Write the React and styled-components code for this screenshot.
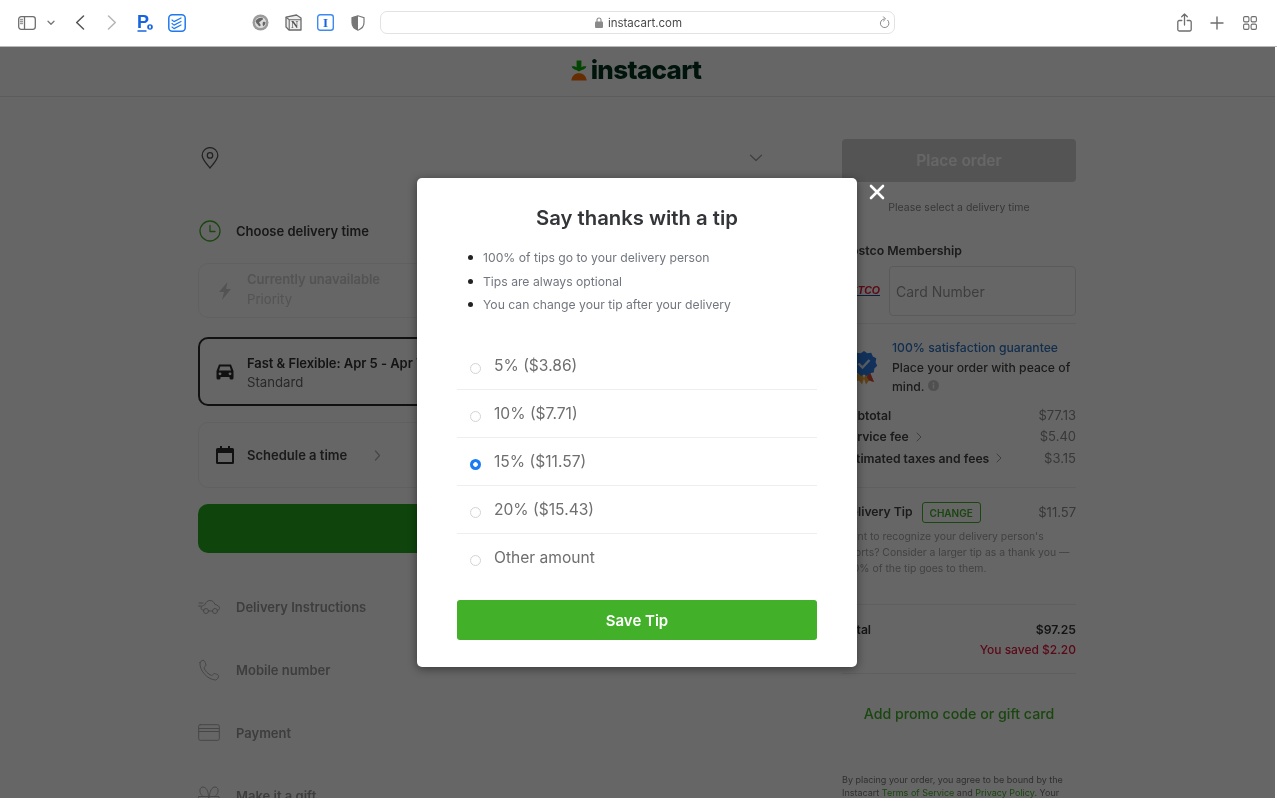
import React from "react";
import styled, { createGlobalStyle } from "styled-components";

const GlobalStyle = createGlobalStyle`
  html, body { margin: 0; padding: 0; background: #fff; overflow: hidden; }
  * { box-sizing: border-box; }
  body { font-family: Inter, "Liberation Sans", sans-serif; }
`;

const Frame = styled.div`
  width: 1277px;
  height: 803px;
  overflow: hidden;
  background: #fff;
  filter: blur(0.5px);
`;

/* browser chrome */
const Toolbar = styled.div`
  height: 47px;
  display: flex;
  align-items: center;
  padding: 0 11px 1px 11px;
  background: #fff;
  border-bottom: 1px solid #b9b9b9;
`;
const Slot = styled.div`
  width: ${(p) => p.$w || 32.5}px;
  height: 24px;
  display: flex;
  align-items: center;
  justify-content: center;
  flex: none;
`;
const Gap = styled.div`
  width: ${(p) => p.$w}px;
  flex: none;
`;
const AddressBar = styled.div`
  width: 515px;
  height: 23px;
  margin-left: 5px;
  padding-left: 3px;
  flex: none;
  position: relative;
  display: flex;
  align-items: center;
  justify-content: center;
  gap: 5px;
  border: 1px solid #e2e2e2;
  border-radius: 7px;
  font-size: 11.5px;
  color: #4a4a4a;
`;
const Reload = styled.div`
  position: absolute;
  right: 4px;
  top: 4px;
  display: flex;
`;
const RightTools = styled.div`
  margin-left: auto;
  display: flex;
`;

/* page below the chrome */
const Viewport = styled.div`
  position: relative;
  width: 1275px;
  height: 751px;
  overflow: hidden;
  background: #fff;
`;
const Header = styled.header`
  height: 50px;
  display: flex;
  align-items: center;
  justify-content: center;
  gap: 4px;
  padding: 0 3px 3px 0;
  border-bottom: 1px solid #e6e6e6;
`;
const Wordmark = styled.span`
  font-size: 26px;
  font-weight: 800;
  letter-spacing: -0.65px;
  color: #00331f;
  line-height: 30px;
`;
const Main = styled.main`
  display: grid;
  grid-template-columns: 575px 234px;
  column-gap: 69px;
  padding-left: 198px;
`;
const LeftCol = styled.div`
  display: flex;
  flex-direction: column;
`;
const AddressRow = styled.div`
  height: 36px;
  margin-top: 43px;
  display: flex;
  align-items: center;
  justify-content: space-between;
  padding: 0 10px 0 3px;
`;
const SectionTitle = styled.div`
  height: 24px;
  margin-top: 43px;
  display: flex;
  align-items: center;
  gap: 15px;
  padding-left: 1px;
  font-size: 13px;
  font-weight: 600;
  color: #3c3c3c;
`;
const OptionCard = styled.div`
  height: ${(p) => p.$h}px;
  margin-top: ${(p) => p.$mt}px;
  display: flex;
  align-items: center;
  gap: 12px;
  padding-left: ${(p) => (p.$selected ? 15 : 16)}px;
  border: ${(p) => (p.$selected ? "2px solid #2c2c2c" : "1px solid #f1f1f1")};
  border-radius: 10px;
`;
const CardText = styled.div`
  display: flex;
  flex-direction: column;
  padding: ${(p) => (p.$muted ? "0 0 3px" : "2px 0 0")};
  font-size: 13.2px;
  line-height: ${(p) => (p.$muted ? 20 : 19)}px;
  color: ${(p) => (p.$muted ? "#cfcfcf" : "#666")};
`;
const CardTitle = styled.span`
  font-size: 13px;
  font-weight: 600;
  white-space: nowrap;
  letter-spacing: -0.05px;
  color: ${(p) => (p.$muted ? "#cfcfcf" : "#333")};
`;
const ScheduleLabel = styled.span`
  font-size: 13px;
  font-weight: 600;
  color: #444;
`;
const ContinueButton = styled.div`
  height: 49px;
  margin-top: 16px;
  border-radius: 10px;
  background: #26ad1f;
`;
const StepRows = styled.div`
  margin-top: 22px;
`;
const StepRow = styled.div`
  height: 63px;
  display: flex;
  align-items: center;
  gap: 16px;
  font-size: 13px;
  font-weight: 600;
  color: #9a9a9a;
`;

const RightCol = styled.aside`
  display: flex;
  flex-direction: column;
`;
const PlaceOrder = styled.div`
  height: 43px;
  margin-top: 42px;
  display: flex;
  align-items: center;
  justify-content: center;
  border-radius: 4px;
  background: #d2d2d2;
  color: #fff;
  font-size: 15.5px;
  font-weight: 600;
`;
const Note = styled.div`
  margin-top: 18px;
  line-height: 16px;
  font-size: 10.5px;
  text-align: center;
  color: #8b8b8b;
`;
const MemberLabel = styled.div`
  margin-top: 27px;
  line-height: 16px;
  font-size: 12.3px;
  font-weight: 600;
  color: #444;
`;
const MemberRow = styled.div`
  height: 50px;
  margin-top: 7px;
  display: flex;
  align-items: center;
  gap: 9px;
`;
const CostcoMark = styled.div`
  width: 38px;
  flex: none;
  display: flex;
  flex-direction: column;
  align-items: flex-end;
  font-family: "Liberation Sans", sans-serif;
  font-size: 10.5px;
  font-weight: 700;
  font-style: italic;
  line-height: 8px;
  color: #e31837;
  &::after {
    content: "";
    width: 24px;
    height: 1.5px;
    margin-top: 1px;
    background: #1f4fa3;
  }
`;
const CardInput = styled.div`
  flex: 1;
  height: 50px;
  display: flex;
  align-items: center;
  padding-left: 6px;
  border: 1px solid #e2e2e2;
  border-radius: 4px;
  font-size: 14px;
  color: #9a9a9a;
`;
const Rule = styled.div`
  height: 1px;
  margin-top: ${(p) => p.$mt}px;
  background: #eeeeee;
`;
const Guarantee = styled.div`
  position: relative;
  margin-top: 14px;
  padding-left: 50px;
  font-size: 12.2px;
  line-height: 19.5px;
  font-weight: 500;
  color: #444;
`;
const GuaranteeBadge = styled.div`
  position: absolute;
  left: 8px;
  top: 12px;
  display: flex;
`;
const BlueLine = styled.div`
  color: #2f74c0;
`;
const Summary = styled.div`
  margin-top: 8px;
  font-size: 13px;
  line-height: 21.5px;
`;
const SummaryRow = styled.div`
  display: flex;
  align-items: center;
  justify-content: space-between;
  color: #8c8c8c;
`;
const RowLabel = styled.span`
  display: flex;
  align-items: center;
  gap: 7px;
  font-size: 12.2px;
  font-weight: 600;
  color: #444;
`;
const TipRow = styled.div`
  height: 21px;
  margin-top: 14px;
  padding-bottom: 2px;
  display: flex;
  align-items: center;
  font-size: 13px;
  color: #8c8c8c;
`;
const ChangeButton = styled.span`
  width: 59px;
  height: 21px;
  align-self: flex-start;
  margin-left: 9px;
  margin-right: auto;
  display: flex;
  align-items: center;
  justify-content: center;
  border: 1px solid #43b02a;
  border-radius: 3px;
  font-size: 10px;
  font-weight: 600;
  color: #43b02a;
`;
const TipText = styled.p`
  margin: 6px 0 0;
  font-size: 10.4px;
  line-height: 16px;
  color: #a3a3a3;
  white-space: nowrap;
`;
const TotalRow = styled.div`
  display: flex;
  margin-top: ${(p) => p.$mt || 0}px;
  line-height: 20px;
  font-size: ${(p) => (p.$saved ? 12 : 12.2)}px;
  font-weight: ${(p) => (p.$saved ? 500 : 600)};
  color: ${(p) => (p.$saved ? "#e2183d" : "#333")};
  justify-content: ${(p) => (p.$saved ? "flex-end" : "space-between")};
`;
const Promo = styled.div`
  margin-top: 30px;
  line-height: 20px;
  text-align: center;
  font-size: 14.2px;
  font-weight: 500;
  color: #43b02a;
`;
const Legal = styled.p`
  margin: 49px 0 0;
  font-size: 9px;
  line-height: 13px;
  color: #777;
  white-space: nowrap;
`;
const LegalLink = styled.span`
  color: #43b02a;
`;

/* modal */
const Overlay = styled.div`
  position: absolute;
  inset: 0;
  display: flex;
  align-items: center;
  justify-content: center;
  background: rgba(0, 0, 0, 0.6);
`;
const Modal = styled.div`
  position: relative;
  width: 440px;
  height: 489px;
  margin-right: 1px;
  padding: 26px 40px 27px;
  background: #fff;
  border-radius: 5px;
  box-shadow: 0 2px 10px rgba(0, 0, 0, 0.45);
`;
const CloseButton = styled.button`
  position: absolute;
  left: 100%;
  top: 5px;
  margin-left: 11px;
  width: 18px;
  height: 18px;
  padding: 0;
  display: flex;
  border: 0;
  background: none;
`;
const ModalTitle = styled.h2`
  margin: 0;
  line-height: 28px;
  text-align: center;
  font-size: 20.3px;
  font-weight: 600;
  color: #343538;
`;
const Bullets = styled.ul`
  margin: 14px 0 0;
  padding: 0 0 0 26px;
  list-style: none;
  font-size: 12.2px;
  line-height: 23.5px;
  color: #72767e;
`;
const Bullet = styled.li`
  position: relative;
  &::before {
    content: "";
    position: absolute;
    left: -15px;
    top: 9px;
    width: 5px;
    height: 5px;
    border-radius: 50%;
    background: #222;
  }
`;
const Options = styled.div`
  margin-top: 25px;
`;
const OptionRow = styled.label`
  height: 48px;
  display: flex;
  align-items: center;
  gap: 13px;
  padding-left: 13px;
  font-size: 15.6px;
  color: #6f6f6f;
  border-bottom: 1px solid #eee;
  &:last-child { border-bottom: 0; }
`;
const Radio = styled.input.attrs({ type: "radio" })`
  appearance: none;
  width: 11px;
  height: 11px;
  margin: 6px 0 0;
  flex: none;
  border: 1px solid #d4d4d4;
  border-radius: 50%;
  background: #fff;
  &:checked {
    border: 0;
    background: radial-gradient(circle, #fff 0 2px, #1a7cf5 2.6px);
  }
`;
const SaveButton = styled.button`
  width: 100%;
  height: 40px;
  margin-top: 18px;
  padding: 1px 0 0;
  border: 0;
  border-radius: 3px;
  background: #43b02a;
  color: #fff;
  font-family: inherit;
  font-size: 15px;
  font-weight: 600;
`;

const Ico = ({ w = 18, h = 18, sw = 1.3, stroke = "#6e6e6e", fill = "none", children }) => (
  <svg width={w} height={h} viewBox={`0 0 ${w} ${h}`} fill={fill} stroke={stroke} strokeWidth={sw} strokeLinecap="round" strokeLinejoin="round">
    {children}
  </svg>
);

const tips = [
  ["5% ($3.86)", false],
  ["10% ($7.71)", false],
  ["15% ($11.57)", true],
  ["20% ($15.43)", false],
  ["Other amount", false],
];

export default function App() {
  return (
    <>
      <GlobalStyle />
      <Frame>
        <Toolbar>
          <Slot>
            <Ico w={18} h={14}>
              <rect x="0.7" y="0.7" width="16.6" height="12.6" rx="2.5" />
              <path d="M6.5 1v12" />
              <path d="M2.5 3.5h2M2.5 5.5h2M2.5 7.5h2" stroke="#999" />
            </Ico>
          </Slot>
          <Slot $w={14}>
            <Ico w={8} h={6} stroke="#777"><path d="M1 1.2l3 3 3-3" /></Ico>
          </Slot>
          <Gap $w={6} />
          <Slot>
            <Ico w={10} h={15} stroke="#555" sw={1.5}><path d="M8.5 1L1.7 7.5l6.8 6.5" /></Ico>
          </Slot>
          <Slot>
            <Ico w={10} h={15} stroke="#b5b5b5" sw={1.5}><path d="M1.5 1l6.8 6.5L1.5 14" /></Ico>
          </Slot>
          <Slot>
            <svg width="16" height="20" viewBox="0 0 16 20">
              <text x="0" y="14.5" fontFamily="Liberation Sans" fontWeight="700" fontSize="18" fill="#1764e0">P</text>
              <circle cx="13" cy="14" r="2.8" fill="#1764e0" />
              <rect x="12.1" y="12.5" width="1.8" height="3" rx="0.9" fill="#fff" />
              <path d="M0.5 18h9" stroke="#1764e0" strokeWidth="1.5" />
            </svg>
          </Slot>
          <Slot>
            <Ico w={18} h={18} stroke="#1f7af0" sw={1.5}>
              <rect x="0.8" y="0.8" width="16.4" height="16.4" rx="3.5" />
              <path d="M4 6l2 1.6 7-3.6M4 9.5l2 1.6 7-3.6M4 13l2 1.6 7-3.6" strokeWidth="1.2" />
            </Ico>
          </Slot>
          <Gap $w={51} />
          <Slot>
            <svg width="17" height="17" viewBox="0 0 17 17">
              <circle cx="8.5" cy="8.5" r="8" fill="#9b9b9b" />
              <circle cx="8.5" cy="8.5" r="5.6" fill="#dcdcdc" />
              <path d="M3.5 7c2-3 5-3.6 7-3 1 1 .2 2-1 2.200-.6 1.600-2 1-2.400 2.200.6 1.400 1.600 1.600 1.600 3-.8 1-1.600 1-2.200.2C5.800 10 4 9.500 3.500 7zM11 8c1-.6 2-.4 2.600.2-.2 2-1 3.300-2.400 4-.6-1.200-.8-2.800-.2-4.200z" fill="#666" />
            </svg>
          </Slot>
          <Slot>
            <svg width="17" height="17" viewBox="0 0 17 17">
              <path d="M1 3.200L11.500 1l4.500 3v12H4l-3-3z" fill="#eee" stroke="#6a6a6a" strokeWidth="1.300" strokeLinejoin="round" />
              <path d="M1 3.200l3.200 2.500H16M4.200 5.700V16" fill="none" stroke="#6a6a6a" strokeWidth="1.100" />
              <text x="6" y="14.300" fontFamily="Liberation Serif" fontWeight="700" fontSize="10" fill="#555">N</text>
            </svg>
          </Slot>
          <Slot>
            <svg width="17" height="17" viewBox="0 0 17 17">
              <rect x="0.700" y="0.700" width="15.600" height="15.600" rx="2.500" fill="#fff" stroke="#3d8bf2" strokeWidth="1.400" />
              <text x="8.500" y="13" textAnchor="middle" fontFamily="Liberation Serif" fontWeight="700" fontSize="13" fill="#1764e0">I</text>
            </svg>
          </Slot>
          <Slot>
            <svg width="14" height="16" viewBox="0 0 14 16">
              <path d="M7 .8L1 2.600v5C1 11.300 3.500 14 7 15.200c3.500-1.200 6-3.900 6-7.600v-5z" fill="#fff" stroke="#777" strokeWidth="1.200" />
              <path d="M7 .8L1 2.600v5C1 11.300 3.500 14 7 15.200z" fill="#777" />
            </svg>
          </Slot>
          <AddressBar>
            <svg width="8" height="11" viewBox="0 0 8 11">
              <rect x="0" y="4.500" width="8" height="6.500" rx="1" fill="#8a8a8a" />
              <path d="M2 5V3a2 2 0 014 0v2" fill="none" stroke="#8a8a8a" strokeWidth="1.100" />
            </svg>
            instacart.com
            <Reload>
              <Ico w={12} h={13} stroke="#8a8a8a" sw={1}>
                <path d="M9.800 4.300A4.300 4.300 0 116 3" />
                <path d="M5.500 .8L7.500 3 5.500 5" />
              </Ico>
            </Reload>
          </AddressBar>
          <RightTools>
            <Slot $w={31}>
              <Ico w={15} h={19}>
                <path d="M4.800 7.500H2.300a1.500 1.500 0 00-1.500 1.500v7.500a1.500 1.500 0 001.500 1.500h10.400a1.500 1.500 0 001.500-1.500V9a1.500 1.500 0 00-1.500-1.500h-2.500" />
                <path d="M7.500 12V1M4.700 3.800L7.500 1l2.800 2.800" />
              </Ico>
            </Slot>
            <Slot $w={33}>
              <Ico w={14} h={14} sw={1.4}><path d="M7 1v12M1 7h12" /></Ico>
            </Slot>
            <Slot $w={33}>
              <Ico w={14} h={14} sw={1.1}>
                <rect x="0.600" y="0.600" width="5.300" height="5.300" rx="1.300" />
                <rect x="8.100" y="0.600" width="5.300" height="5.300" rx="1.300" />
                <rect x="0.600" y="8.100" width="5.300" height="5.300" rx="1.300" />
                <rect x="8.100" y="8.100" width="5.300" height="5.300" rx="1.300" />
              </Ico>
            </Slot>
          </RightTools>
        </Toolbar>

        <Viewport>
          <Header>
            <svg width="16" height="21" viewBox="0 0 16 21">
              <path d="M8 11.500C4.800 9.500 1.500 9.500.6 6.500c2-.8 3.800-.2 5 .8V.5h4.800v6.800c1.200-1 3-1.600 5-.8-.9 3-4.200 3-7.400 5z" fill="#0aad0a" />
              <path d="M.3 20.500C.8 15.800 3.800 13.200 8 13.200s7.200 2.600 7.700 7.300z" fill="#ff7009" />
            </svg>
            <Wordmark>instacart</Wordmark>
          </Header>

          <Main>
            <LeftCol>
              <AddressRow>
                <Ico w={18} h={22} stroke="#555">
                  <path d="M9 21C4.500 15.500 1.200 12 1.200 8.400a7.800 7.800 0 0115.600 0C16.800 12 13.500 15.500 9 21z" />
                  <circle cx="9" cy="8.400" r="2.700" />
                </Ico>
                <Ico w={14} h={8} stroke="#a0a0a0"><path d="M1.500 1.200L7 6.500l5.500-5.300" /></Ico>
              </AddressRow>
              <SectionTitle>
                <Ico w={22} h={22} stroke="#43b02a">
                  <circle cx="11" cy="11" r="10" />
                  <path d="M11 5.500V11.500h5" />
                </Ico>
                Choose delivery time
              </SectionTitle>
              <OptionCard $h={55} $mt={20}>
                <svg width="20" height="20" viewBox="0 0 20 20">
                  <path d="M12.500 1L4 11h5l-2 8 9-11h-5z" fill="#cfcfcf" />
                </svg>
                <CardText $muted>
                  <CardTitle $muted>Currently unavailable</CardTitle>
                  Priority
                </CardText>
              </OptionCard>
              <OptionCard $h={69} $mt={19} $selected>
                <svg width="20" height="18" viewBox="0 0 20 18">
                  <path d="M4 1.500h12l2.500 6.500v7a1.500 1.500 0 01-1.500 1.500h-1a1.500 1.500 0 01-1.500-1.500v-1h-9v1A1.500 1.500 0 014 16.500H3A1.500 1.500 0 011.500 15V8zM5.300 3.500L4 7.500h12l-1.300-4z" fill="#2c2c2c" fillRule="evenodd" />
                  <circle cx="5" cy="10.800" r="1.400" fill="#fff" />
                  <circle cx="15" cy="10.800" r="1.400" fill="#fff" />
                </svg>
                <CardText>
                  <CardTitle>Fast &amp; Flexible: Apr 5 - Apr 7</CardTitle>
                  Standard
                </CardText>
              </OptionCard>
              <OptionCard $h={66} $mt={16}>
                <svg width="20" height="18" viewBox="0 0 20 18">
                  <path d="M5 0h2v2h6V0h2v2h2.500A1.500 1.500 0 0119 3.500v13a1.500 1.500 0 01-1.500 1.500h-15A1.500 1.500 0 011 16.500v-13A1.500 1.500 0 012.500 2H5zM3 7v9h14V7z" fill="#2c2c2c" fillRule="evenodd" />
                </svg>
                <ScheduleLabel>Schedule a time</ScheduleLabel>
                <Gap $w={3} />
                <Ico w={7} h={11} stroke="#b0b0b0"><path d="M1.500 1l4 4.500-4 4.500" /></Ico>
              </OptionCard>
              <ContinueButton />
              <StepRows>
                <StepRow>
                  <Ico w={22} h={16} stroke="#b0b0b0" sw={1}>
                    <path d="M6 11H4.500C3.500 11 3 10 3 9c0-1.500 2-2.500 3.500-3C8 3 9.500 1.500 12 1.500s4 1.500 5 4c2.500.5 4.500 1.500 4.500 4 0 1-.5 1.500-1.500 1.500" />
                    <circle cx="8" cy="12" r="2.500" /><circle cx="17" cy="12" r="2.500" />
                    <path d="M10.500 12H14.500M1 4h4M.5 7h3" />
                  </Ico>
                  Delivery Instructions
                </StepRow>
                <StepRow>
                  <Ico w={22} h={22} stroke="#b0b0b0" sw={1}>
                    <path d="M2 3.500C3 1.500 5 1 6 1.500c1 1 1.500 3 2 4.500 0 1-2 2-2 3 1 3 4 6 7.500 7.500 1 0 2-2 3-2 1.500.5 3.500 1 4 2 .5 1.500-1 4-3 4.500C9 20.500 1 11 2 3.500z" />
                  </Ico>
                  Mobile number
                </StepRow>
                <StepRow>
                  <Ico w={22} h={17} stroke="#b0b0b0" sw={1}>
                    <rect x="0.700" y="0.700" width="20.600" height="15.600" rx="1.500" />
                    <path d="M1 4.500h20M1 7.500h20" />
                  </Ico>
                  Payment
                </StepRow>
                <StepRow>
                  <Ico w={22} h={20} stroke="#b0b0b0" sw={1}>
                    <path d="M1 10.500h9.500V19H1zM11.500 10.500H21V19h-9.500z" />
                    <path d="M5.500 10.500C1 9 .5 1 5 1c3 0 5.500 4 5.500 9.500M16.500 10.500C21 9 21.500 1 17 1c-3 0-5.500 4-5.500 9.500" />
                  </Ico>
                  Make it a gift
                </StepRow>
              </StepRows>
            </LeftCol>

            <RightCol>
              <PlaceOrder>Place order</PlaceOrder>
              <Note>Please select a delivery time</Note>
              <MemberLabel>Costco Membership</MemberLabel>
              <MemberRow>
                <CostcoMark>COSTCO</CostcoMark>
                <CardInput>Card Number</CardInput>
              </MemberRow>
              <Rule $mt={7} />
              <Guarantee>
                <GuaranteeBadge>
                  <svg width="28" height="36" viewBox="0 0 28 36">
                    <path d="M9 20l-5 12 5-1.500 3 4 4-12zM19 20l5 12-5-1.500-3 4-4-12z" fill="#e8a33a" />
                    <path d="M19 20l5 12-5-1.500-2-3z" fill="#d8483b" />
                    <path d="M14 1l3.300 2.200 3.900-.4 1.700 3.600 3.400 1.900-.7 3.900 1.600 3.600-2.800 2.800-.7 3.900-3.900.7L17 26l-3-1.500-3 1.500-2.800-2.700-3.900-.7-.7-3.900L.8 15.800 2.400 12.200l-.7-3.900 3.400-1.900 1.700-3.600 3.900.4z" fill="#2f7be0" />
                    <path d="M8.500 13.500l4 4 7-7.500" fill="none" stroke="#dbe9fb" strokeWidth="2.400" />
                  </svg>
                </GuaranteeBadge>
                <BlueLine>100% satisfaction guarantee</BlueLine>
                Place your order with peace of
                <br />
                mind.{" "}
                <svg width="11" height="11" viewBox="0 0 11 11">
                  <circle cx="5.500" cy="5.500" r="5.500" fill="#c9c9c9" />
                  <rect x="4.800" y="4.500" width="1.400" height="4" fill="#fff" />
                  <rect x="4.800" y="2.500" width="1.400" height="1.400" fill="#fff" />
                </svg>
              </Guarantee>
              <Summary>
                <SummaryRow><RowLabel>Subtotal</RowLabel>$77.13</SummaryRow>
                <SummaryRow>
                  <RowLabel>
                    Service fee
                    <Ico w={6} h={10} stroke="#999" sw={1}><path d="M1 1l4 4-4 4" /></Ico>
                  </RowLabel>
                  $5.40
                </SummaryRow>
                <SummaryRow>
                  <RowLabel>
                    Estimated taxes and fees
                    <Ico w={6} h={10} stroke="#999" sw={1}><path d="M1 1l4 4-4 4" /></Ico>
                  </RowLabel>
                  $3.15
                </SummaryRow>
              </Summary>
              <Rule $mt={18} />
              <TipRow>
                <RowLabel>Delivery Tip</RowLabel>
                <ChangeButton>CHANGE</ChangeButton>
                $11.57
              </TipRow>
              <TipText>
                Want to recognize your delivery person's
                <br />
                efforts? Consider a larger tip as a thank you —
                <br />
                100% of the tip goes to them.
              </TipText>
              <Rule $mt={27} />
              <TotalRow $mt={15}>
                <span>Total</span>
                <span>$97.25</span>
              </TotalRow>
              <TotalRow $saved>You saved $2.20</TotalRow>
              <Rule $mt={13} />
              <Promo>Add promo code or gift card</Promo>
              <Legal>
                By placing your order, you agree to be bound by the
                <br />
                Instacart <LegalLink>Terms of Service</LegalLink> and <LegalLink>Privacy Policy</LegalLink>. Your
              </Legal>
            </RightCol>
          </Main>

          <Overlay>
            <Modal>
              <CloseButton aria-label="Close">
                <Ico w={18} h={18} stroke="#fff" sw={2.6}><path d="M3 3l12 12M15 3L3 15" /></Ico>
              </CloseButton>
              <ModalTitle>Say thanks with a tip</ModalTitle>
              <Bullets>
                <Bullet>100% of tips go to your delivery person</Bullet>
                <Bullet>Tips are always optional</Bullet>
                <Bullet>You can change your tip after your delivery</Bullet>
              </Bullets>
              <Options>
                {tips.map(([label, checked]) => (
                  <OptionRow key={label}>
                    <Radio name="tip" defaultChecked={checked} />
                    {label}
                  </OptionRow>
                ))}
              </Options>
              <SaveButton>Save Tip</SaveButton>
            </Modal>
          </Overlay>
        </Viewport>
      </Frame>
    </>
  );
}
